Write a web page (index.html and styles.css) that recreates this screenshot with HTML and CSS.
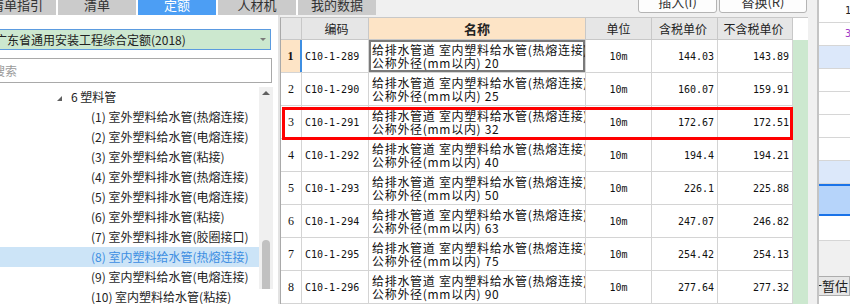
FILE: index.html
```html
<!DOCTYPE html>
<html lang="zh-CN">
<head>
    <meta charset="UTF-8">
    <meta name="viewport" content="width=device-width, initial-scale=1.0">
    <title>定额</title>
    <link rel="stylesheet" href="styles.css">
</head>
<body>
<div class="app">
    <div class="main">
        <div class="topbar">
            <div class="tabs">
                <div class="tab">清单指引</div>
                <div class="tab">清单</div>
                <div class="tab active">定额</div>
                <div class="tab">人材机</div>
                <div class="tab">我的数据</div>
            </div>
            <div class="tool-btns">
                <div class="tool-btn">插入(I)</div>
                <div class="tool-btn wide">替换(R)</div>
            </div>
        </div>

        <div class="workspace">
            <div class="left">
                <div class="left-inner">
                    <div class="lib-select">
                        <span>广东省通用安装工程综合定额(2018)</span>
                        <i class="caret"></i>
                    </div>
                    <div class="search">搜索</div>
                    <div class="tree-wrap">
                        <ul class="tree">
                            <li class="node"><i class="expander"></i>6 塑料管</li>
                            <li class="leaf">(1) 室外塑料给水管(热熔连接)</li>
                            <li class="leaf">(2) 室外塑料给水管(电熔连接)</li>
                            <li class="leaf">(3) 室外塑料给水管(粘接)</li>
                            <li class="leaf">(4) 室外塑料排水管(热熔连接)</li>
                            <li class="leaf">(5) 室外塑料排水管(电熔连接)</li>
                            <li class="leaf">(6) 室外塑料排水管(粘接)</li>
                            <li class="leaf">(7) 室外塑料排水管(胶圈接口)</li>
                            <li class="leaf selected">(8) 室内塑料给水管(热熔连接)</li>
                            <li class="leaf">(9) 室内塑料给水管(电熔连接)</li>
                            <li class="leaf">(10) 室内塑料给水管(粘接)</li>
                        </ul>
                        <div class="vscroll">
                            <i class="arrow-up"></i>
                            <div class="thumb"></div>
                        </div>
                    </div>
                </div>
            </div>

            <div class="splitter"></div>

            <div class="grid">
                <div class="table">
                    <div class="row head">
                        <div class="cell rn"></div>
                        <div class="cell code">编码</div>
                        <div class="cell name">名称</div>
                        <div class="cell unit">单位</div>
                        <div class="cell price">含税单价</div>
                        <div class="cell price2">不含税单价</div>
                    </div>
                    <div class="row current">
                        <div class="cell rn">1</div>
                        <div class="cell code">C10-1-289</div>
                        <div class="cell name focus"><p>给排水管道 室内塑料给水管(热熔连接)</p><p>公称外径(mm以内) 20</p></div>
                        <div class="cell unit">10m</div>
                        <div class="cell price">144.03</div>
                        <div class="cell price2">143.89</div>
                    </div>
                    <div class="row">
                        <div class="cell rn">2</div>
                        <div class="cell code">C10-1-290</div>
                        <div class="cell name"><p>给排水管道 室内塑料给水管(热熔连接)</p><p>公称外径(mm以内) 25</p></div>
                        <div class="cell unit">10m</div>
                        <div class="cell price">160.07</div>
                        <div class="cell price2">159.91</div>
                    </div>
                    <div class="row">
                        <div class="cell rn">3</div>
                        <div class="cell code">C10-1-291</div>
                        <div class="cell name"><p>给排水管道 室内塑料给水管(热熔连接)</p><p>公称外径(mm以内) 32</p></div>
                        <div class="cell unit">10m</div>
                        <div class="cell price">172.67</div>
                        <div class="cell price2">172.51</div>
                    </div>
                    <div class="row">
                        <div class="cell rn">4</div>
                        <div class="cell code">C10-1-292</div>
                        <div class="cell name"><p>给排水管道 室内塑料给水管(热熔连接)</p><p>公称外径(mm以内) 40</p></div>
                        <div class="cell unit">10m</div>
                        <div class="cell price">194.4</div>
                        <div class="cell price2">194.21</div>
                    </div>
                    <div class="row">
                        <div class="cell rn">5</div>
                        <div class="cell code">C10-1-293</div>
                        <div class="cell name"><p>给排水管道 室内塑料给水管(热熔连接)</p><p>公称外径(mm以内) 50</p></div>
                        <div class="cell unit">10m</div>
                        <div class="cell price">226.1</div>
                        <div class="cell price2">225.88</div>
                    </div>
                    <div class="row">
                        <div class="cell rn">6</div>
                        <div class="cell code">C10-1-294</div>
                        <div class="cell name"><p>给排水管道 室内塑料给水管(热熔连接)</p><p>公称外径(mm以内) 63</p></div>
                        <div class="cell unit">10m</div>
                        <div class="cell price">247.07</div>
                        <div class="cell price2">246.82</div>
                    </div>
                    <div class="row">
                        <div class="cell rn">7</div>
                        <div class="cell code">C10-1-295</div>
                        <div class="cell name"><p>给排水管道 室内塑料给水管(热熔连接)</p><p>公称外径(mm以内) 75</p></div>
                        <div class="cell unit">10m</div>
                        <div class="cell price">254.42</div>
                        <div class="cell price2">254.13</div>
                    </div>
                    <div class="row">
                        <div class="cell rn">8</div>
                        <div class="cell code">C10-1-296</div>
                        <div class="cell name"><p>给排水管道 室内塑料给水管(热熔连接)</p><p>公称外径(mm以内) 90</p></div>
                        <div class="cell unit">10m</div>
                        <div class="cell price">277.64</div>
                        <div class="cell price2">277.32</div>
                    </div>
                    <div class="mark"></div>
                </div>
                <div class="filler">
                    <div class="filler-head"></div>
                </div>
            </div>
        </div>
    </div>

    <div class="side">
        <div class="side-row">1</div>
        <div class="side-row purple">3</div>
        <div class="side-row light"></div>
        <div class="side-row"></div>
        <div class="side-row"></div>
        <div class="side-row"></div>
        <div class="side-row"></div>
        <div class="side-row light"></div>
        <div class="side-row active"></div>
        <div class="side-row tall"></div>
        <div class="side-gray"></div>
        <div class="side-btn">计暂估</div>
    </div>
</div>
</body>
</html>
```

FILE: styles.css
```css
body {
    margin: 0;
    background-color: #f0f0f0;
    font-family: "Noto Sans CJK SC", "Microsoft YaHei", sans-serif;
    font-size: 12px;
    color: #222;
    overflow: hidden;
}
ul {
    list-style: none;
    margin: 0;
    padding: 0;
}
p {
    margin: 0;
}
.app {
    display: flex;
    width: 850px;
    height: 304px;
    overflow: hidden;
}
.main {
    width: 817px;
    flex-shrink: 0;
}

/* top tabs + buttons */
.topbar {
    display: flex;
    height: 15px;
}
.tabs {
    display: flex;
    gap: 2px;
    margin-left: -22px;
    background-color: #fff;
}
.tab {
    width: 78px;
    height: 15px;
    line-height: 10px;
    text-align: center;
    font-size: 13px;
    background-color: #cbcbcb;
    color: #333;
    overflow: hidden;
}
.tab.active {
    background-color: #4c9ef4;
    color: #fff;
}
.tool-btns {
    display: flex;
    gap: 2px;
    margin-left: 262px;
}
.tool-btn {
    width: 77px;
    height: 18px;
    margin-top: -7px;
    line-height: 16px;
    text-align: center;
    font-size: 13px;
    background-color: #fdfdfd;
    border: 1px solid #b4b4b4;
    border-radius: 3px;
    color: #333;
}
.tool-btn.wide {
    width: 86px;
}

.workspace {
    display: flex;
    height: 289px;
}

/* left library panel */
.left {
    width: 278px;
    flex-shrink: 0;
    background-color: #fff;
    overflow: hidden;
}
.left-inner {
    width: 290px;
    margin-left: -12px;
}
.lib-select {
    display: flex;
    justify-content: space-between;
    align-items: center;
    box-sizing: border-box;
    width: 283px;
    height: 21px;
    margin-top: 14px;
    padding: 0 4px 0 6px;
    background-color: #cce8cf;
    border: 1px solid #5b9be0;
    line-height: 19px;
}
.caret {
    width: 0;
    height: 0;
    border-left: 3px solid transparent;
    border-right: 3px solid transparent;
    border-top: 3px solid #7a7a7a;
}
.search {
    box-sizing: border-box;
    width: 284px;
    height: 25px;
    margin-top: 8px;
    padding-left: 4px;
    border: 1px solid #a9a9a9;
    line-height: 23px;
    color: #9a9a9a;
}
.tree-wrap {
    display: flex;
    margin-top: 4px;
    height: 202px;
}
.tree {
    width: 271px;
}
.tree li {
    height: 20px;
    line-height: 20px;
    white-space: nowrap;
    color: #1e1e1e;
}
.tree .node {
    padding-left: 69px;
}
.expander {
    display: inline-block;
    width: 0;
    height: 0;
    margin-right: 9px;
    border-left: 5px solid transparent;
    border-bottom: 5px solid #606060;
    vertical-align: 1px;
}
.tree .leaf {
    padding-left: 103px;
}
.tree .leaf.selected {
    background-color: #cce4f7;
    color: #3d8ee2;
}
.vscroll {
    width: 14px;
    background-color: #f0f0f0;
    display: flex;
    flex-direction: column;
    align-items: center;
}
.arrow-up {
    width: 0;
    height: 0;
    margin-top: 4px;
    border-left: 4px solid transparent;
    border-right: 4px solid transparent;
    border-bottom: 4px solid #606060;
}
.thumb {
    width: 8px;
    flex: 1;
    margin-top: 145px;
    background-color: #c1c1c1;
    border-radius: 4px 4px 0 0;
}
.splitter {
    width: 2px;
    background-color: #e3e3e3;
}

/* quota grid */
.grid {
    display: flex;
    width: 528px;
    margin-top: 2px;
}
.table {
    position: relative;
    width: 513px;
    box-sizing: border-box;
    border-left: 1px solid #a9a9a9;
    border-top: 1px solid #c8c8c8;
    background-color: #fff;
}
.row {
    display: flex;
    height: 33px;
    box-sizing: border-box;
    border-bottom: 1px solid #d4d4d4;
}
.row.head {
    height: 22px;
    background-color: #e6e6e6;
    border-bottom-color: #c8c8c8;
}
.cell {
    box-sizing: border-box;
    border-right: 1px solid #d4d4d4;
    overflow: hidden;
    white-space: nowrap;
    display: flex;
    align-items: center;
    font-family: "DejaVu Sans Mono", "Noto Sans CJK SC", monospace;
    font-size: 10px;
    color: #111;
}
.head .cell {
    justify-content: center;
    border-right-color: #c8c8c8;
    font-family: "Noto Sans CJK SC", sans-serif;
    font-size: 12px;
    color: #222;
}
.head .name {
    padding: 0;
    align-items: center;
    justify-content: center;
    background-color: #fde4c6;
    font-size: 13px;
    font-weight: bold;
    letter-spacing: 0;
}
.rn {
    width: 21px;
    justify-content: center;
    font-family: "Liberation Serif", serif;
    font-size: 12px;
}
.code {
    width: 67px;
    padding-left: 3px;
}
.name {
    width: 217px;
    padding: 3px 0 0 3px;
    flex-direction: column;
    align-items: flex-start;
    justify-content: flex-start;
    font-family: "Noto Sans CJK SC", sans-serif;
    font-size: 12px;
    letter-spacing: 0.7px;
    line-height: 13px;
}
.unit {
    width: 66px;
    justify-content: center;
}
.price {
    width: 66px;
    justify-content: flex-end;
    padding-right: 3px;
}
.price2 {
    width: 75px;
    justify-content: flex-end;
    padding-right: 3px;
}
.current .rn {
    background-color: #fde4c6;
    font-weight: bold;
    border-right: 2px solid #3d8ee2;
}
.focus {
    box-shadow: inset 0 0 0 2px #7a7a7a;
}
.mark {
    position: absolute;
    left: 1px;
    top: 89px;
    width: 511px;
    height: 33px;
    box-sizing: border-box;
    border: 3px solid #ff0000;
}
.filler {
    width: 15px;
    border-top: 1px solid #c8c8c8;
    background-color: #cce8cf;
}
.filler-head {
    height: 22px;
    background-color: #fff;
}

/* right side panel */
.side {
    width: 31px;
    flex-shrink: 0;
    border-left: 2px solid #c4c4c4;
    background-color: #fff;
    overflow: hidden;
}
.side-row {
    height: 23px;
    box-sizing: border-box;
    border-bottom: 1px solid #d6d6d6;
    padding-left: 26px;
    line-height: 22px;
    font-family: "DejaVu Sans Mono", monospace;
    font-size: 10px;
    white-space: nowrap;
}
.side-row.purple {
    color: #a03cc8;
}
.side-row.light {
    background-color: #dce8fa;
}
.side-row.active {
    height: 32px;
    background-color: #b6d4fa;
    border-top: 2px solid #1a73e8;
    border-bottom: 2px solid #1a73e8;
}
.side-row.tall {
    height: 25px;
}
.side-gray {
    height: 35px;
    background-color: #f0f0f0;
}
.side-btn {
    height: 20px;
    margin-left: -12px;
    box-sizing: border-box;
    border: 1px solid #adadad;
    background-color: #e6e6e6;
    line-height: 18px;
    font-size: 13px;
    white-space: nowrap;
    padding-left: 1px;
}
```
